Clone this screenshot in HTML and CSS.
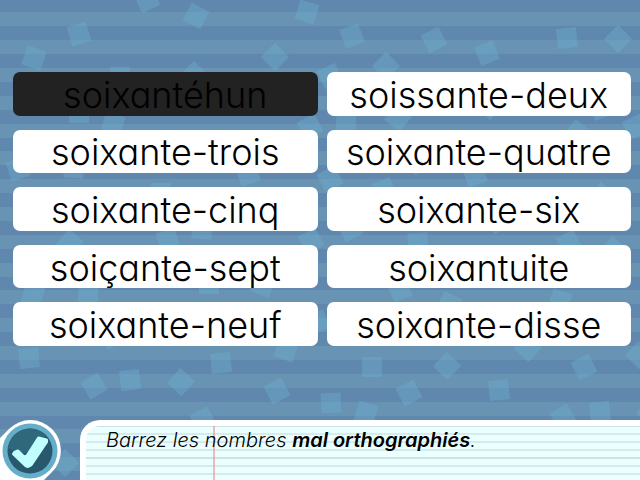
FILE: index.html
```html
<!DOCTYPE html>
<html lang="fr">
<head>
<meta charset="utf-8">
<title>Barrez les nombres</title>
<link rel="stylesheet" href="styles.css">
</head>
<body>
<svg class="backdrop" viewBox="0 0 640 480" preserveAspectRatio="xMidYMid slice" aria-hidden="true">
  <defs><rect id="s" x="-10" y="-10" width="20" height="20"/></defs>
  <path fill="#6893b3" d="M0 12h640v14H0zM0 40h640v14H0zM0 68h640v14H0zM0 96h640v14H0zM0 124h640v14H0zM0 151h640v14H0zM0 179h640v14H0zM0 207h640v14H0zM0 235h640v14H0zM0 263h640v14H0zM0 290h640v14H0zM0 318h640v14H0zM0 346h640v14H0zM0 374h640v14H0zM0 402h640v14H0zM0 429h640v14H0zM0 457h640v14H0z"/>
  <g class="confetti">
    <use href="#s" transform="translate(34 58) rotate(19)"/>
    <use href="#s" transform="translate(79 34) rotate(-18)"/>
    <use href="#s" transform="translate(147 0) rotate(-25)"/>
    <use href="#s" transform="translate(196 16) rotate(27)"/>
    <use href="#s" transform="translate(307 12) rotate(17)"/>
    <use href="#s" transform="translate(275 57) rotate(45)"/>
    <use href="#s" transform="translate(120 77)"/>
    <use href="#s" transform="translate(194 75) rotate(45)"/>
    <use href="#s" transform="translate(352 36) rotate(-20)"/>
    <use href="#s" transform="translate(434 40) rotate(-27)"/>
    <use href="#s" transform="translate(487 53) rotate(-22)"/>
    <use href="#s" transform="translate(567 38) rotate(-6)"/>
    <use href="#s" transform="translate(618 39) rotate(45)"/>
    <use href="#s" transform="translate(386 66) rotate(45)"/>
    <use href="#s" transform="translate(330 76) rotate(-25)"/>
    <use href="#s" transform="translate(79 113)"/>
    <use href="#s" transform="translate(113 124) rotate(17)"/>
    <use href="#s" transform="translate(153 104) rotate(-25)"/>
    <use href="#s" transform="translate(310 127) rotate(-28)"/>
    <use href="#s" transform="translate(346 123) rotate(4)"/>
    <use href="#s" transform="translate(398 118) rotate(40)"/>
    <use href="#s" transform="translate(433 106)"/>
    <use href="#s" transform="translate(490 106) rotate(45)"/>
    <use href="#s" transform="translate(601 108) rotate(-22)"/>
    <use href="#s" transform="translate(577 133) rotate(40)"/>
    <use href="#s" transform="translate(635 127) rotate(-25)"/>
    <use href="#s" transform="translate(18 169) rotate(-18)"/>
    <use href="#s" transform="translate(74 168) rotate(4)"/>
    <use href="#s" transform="translate(248 174) rotate(-20)"/>
    <use href="#s" transform="translate(161 193)"/>
    <use href="#s" transform="translate(330 179) rotate(-28)"/>
    <use href="#s" transform="translate(384 190) rotate(-22)"/>
    <use href="#s" transform="translate(475 175) rotate(-21)"/>
    <use href="#s" transform="translate(420 162) rotate(-22)"/>
    <use href="#s" transform="translate(602 196) rotate(40)"/>
    <use href="#s" transform="translate(70 243) rotate(40)"/>
    <use href="#s" transform="translate(168 240) rotate(-18)"/>
    <use href="#s" transform="translate(202 229) rotate(4)"/>
    <use href="#s" transform="translate(311 241) rotate(-28)"/>
    <use href="#s" transform="translate(350 229) rotate(-28)"/>
    <use href="#s" transform="translate(418 243) rotate(-4)"/>
    <use href="#s" transform="translate(499 221) rotate(-25)"/>
    <use href="#s" transform="translate(569 243) rotate(-28)"/>
    <use href="#s" transform="translate(613 250) rotate(43)"/>
    <use href="#s" transform="translate(33 295) rotate(17)"/>
    <use href="#s" transform="translate(88 296) rotate(4)"/>
    <use href="#s" transform="translate(209 284)"/>
    <use href="#s" transform="translate(263 285) rotate(22)"/>
    <use href="#s" transform="translate(400 290) rotate(-22)"/>
    <use href="#s" transform="translate(449 304) rotate(27)"/>
    <use href="#s" transform="translate(560 301) rotate(17)"/>
    <use href="#s" transform="translate(317 322) rotate(-20)"/>
    <use href="#s" transform="translate(29 358) rotate(-6)"/>
    <use href="#s" transform="translate(112 336) rotate(-30)"/>
    <use href="#s" transform="translate(94 386) rotate(-31)"/>
    <use href="#s" transform="translate(130 380) rotate(-7)"/>
    <use href="#s" transform="translate(181 382) rotate(43)"/>
    <use href="#s" transform="translate(221 363) rotate(-6)"/>
    <use href="#s" transform="translate(286 350) rotate(18)"/>
    <use href="#s" transform="translate(277 391) rotate(-27)"/>
    <use href="#s" transform="translate(203 420) rotate(-28)"/>
    <use href="#s" transform="translate(65 463) rotate(45)"/>
    <use href="#s" transform="translate(372 367)"/>
    <use href="#s" transform="translate(447 366) rotate(43)"/>
    <use href="#s" transform="translate(528 348) rotate(43)"/>
    <use href="#s" transform="translate(584 367) rotate(-27)"/>
    <use href="#s" transform="translate(639 355) rotate(43)"/>
    <use href="#s" transform="translate(409 393) rotate(-27)"/>
    <use href="#s" transform="translate(499 390) rotate(-6)"/>
    <use href="#s" transform="translate(331 403) rotate(-3)"/>
    <use href="#s" transform="translate(366 413) rotate(17)"/>
    <use href="#s" transform="translate(563 417) rotate(-31)"/>
    <use href="#s" transform="translate(600 412) rotate(-6)"/>
    <use href="#s" transform="translate(650 413) rotate(43)"/>
  </g>
</svg>
<main class="choices">
  <button class="choice crossed" type="button" aria-pressed="true">soixantéhun</button>
  <button class="choice" type="button">soissante-deux</button>
  <button class="choice" type="button">soixante-trois</button>
  <button class="choice" type="button">soixante-quatre</button>
  <button class="choice" type="button">soixante-cinq</button>
  <button class="choice" type="button">soixante-six</button>
  <button class="choice" type="button">soiçante-sept</button>
  <button class="choice" type="button">soixantuite</button>
  <button class="choice" type="button">soixante-neuf</button>
  <button class="choice" type="button">soixante-disse</button>
</main>
<footer class="bar">
  <button class="validate" type="button" aria-label="Valider">
    <svg viewBox="0 0 64 60" aria-hidden="true">
      <path fill="#fff" d="M0 18L9 9A30 30 0 0 1 52 52L44 60H0z"/>
      <circle cx="30" cy="31" r="30" fill="#fff"/>
      <circle cx="30" cy="31" r="27.500" fill="#64aeca"/>
      <circle cx="30" cy="31" r="22.500" fill="#28586c"/>
      <path fill="#2f687b" d="M8 28A22.500 22.500 0 0 1 46 15Q38 30 27 33Q16 33 8 28z"/>
      <path fill="#c1ffff" stroke="#c1ffff" stroke-width="3" stroke-linejoin="round" d="M38.500 18l8 2v2L31 45l-3 1.500l-2.500-1L13.500 34l1-1.500l3.500-1.500l6 6l3-1z"/>
    </svg>
  </button>
  <div class="note">
    <p class="sheet">Barrez les nombres <strong>mal orthographiés</strong>.</p>
  </div>
</footer>
</body>
</html>
```
FILE: styles.css
```css
* { box-sizing: border-box; }

body {
  margin: 0;
  min-height: 100vh;
  display: flex;
  flex-direction: column;
  background: #6087ae;
  color: #000;
  font-family: "Century Gothic", Inter, "Liberation Sans", sans-serif;
  font-feature-settings: "cv11";
  overflow: hidden;
}

.backdrop {
  position: absolute;
  inset: 0;
  z-index: -1;
  width: 100%;
  height: 100%;
}

.confetti { fill: #6fb0d0; fill-opacity: 0.4; }

.choices {
  flex: 1;
  display: grid;
  grid-template-columns: 1fr 1fr;
  grid-auto-rows: 1fr;
  gap: 14px 9px;
  padding: 72px 9px 74px 13px;
}

.choice {
  min-width: 0;
  padding: 2px 0 0;
  border: 0;
  border-radius: 7px;
  background: #fff;
  color: #000;
  font: inherit;
  font-size: 36px;
  font-weight: 300;
  line-height: 40px;
  overflow: hidden;
  white-space: nowrap;
}

.crossed { background: #222; }

.bar {
  display: flex;
  gap: 16px;
}

.validate {
  flex: none;
  width: 64px;
  padding: 0;
  border: 0;
  background: none;
}

.validate svg { display: block; width: 100%; }

.note {
  flex: 1;
  padding: 6px 0 0 6px;
  border-radius: 20px 0 0 0;
  background: #fff;
}

.sheet {
  margin: 0;
  min-height: 54px;
  padding: 2px 20px;
  border-radius: 14px 0 0 0;
  background:
    linear-gradient(#f08c9499, #f08c9499) 127px 0 / 2px 100% no-repeat,
    linear-gradient(#cfe2e4, #cfe2e4) 0 0 / 100% 1px no-repeat,
    repeating-linear-gradient(#ebffff 0 7px, #d5ebee 7px 9px, #ebffff 9px 15px, #d5ebee 15px 17px, #ebffff 17px 23px, #d5ebee 23px 25px, #ebffff 25px 31px, #cfe2e4 31px 33px, #ebffff 33px 39px, #d5ebee 39px 41px, #ebffff 41px 47px, #d5ebee 47px 49px, #ebffff 49px 54px);
  font-size: 20px;
  font-style: italic;
  font-weight: 300;
  line-height: 24px;
}

.sheet strong { font-weight: 600; }
```
